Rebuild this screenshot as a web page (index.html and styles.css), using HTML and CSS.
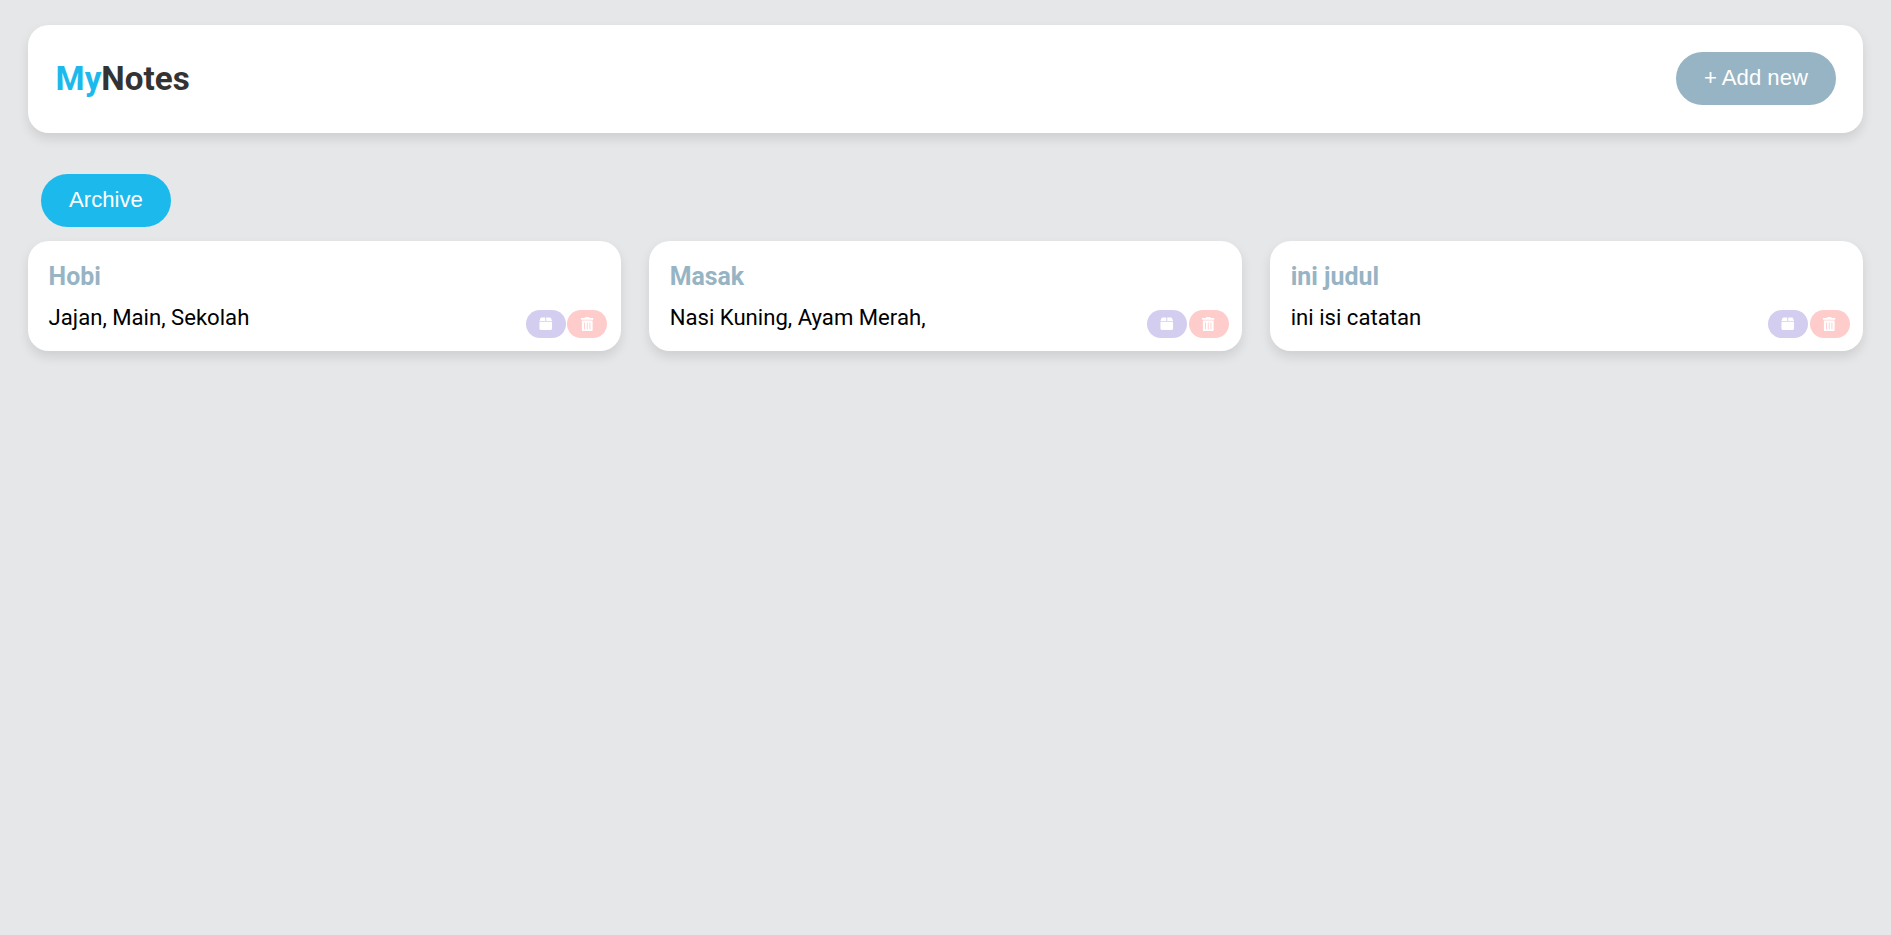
FILE: index.html
```html
<!DOCTYPE html>
<html lang="id">
<head>
<meta charset="utf-8">
<title>MyNotes</title>
<link rel="stylesheet" href="styles.css">
</head>
<body>
<svg class="sprite" aria-hidden="true">
  <symbol id="box" viewBox="0 0 16 16">
    <path d="M4 1.500h3.500v3.700H1.500l.9-2.600c.3-.8.8-1.100 1.600-1.100zM8.500 1.500H12c.8 0 1.300.3 1.600 1.100l.9 2.600h-6zM1.500 6h13v7c0 1-.6 1.500-1.500 1.500H3c-.9 0-1.500-.5-1.500-1.500z"/>
  </symbol>
  <symbol id="trash" viewBox="0 0 448 512">
    <path fill-rule="evenodd" d="M32 464a48 48 0 0 0 48 48h288a48 48 0 0 0 48-48V128H32zm272-256a16 16 0 0 1 32 0v224a16 16 0 0 1-32 0zm-96 0a16 16 0 0 1 32 0v224a16 16 0 0 1-32 0zm-96 0a16 16 0 0 1 32 0v224a16 16 0 0 1-32 0zM432 32H312l-9.400-18.700A24 24 0 0 0 281.100 0H166.800a23.700 23.700 0 0 0-21.400 13.300L136 32H16A16 16 0 0 0 0 48v32a16 16 0 0 0 16 16h416a16 16 0 0 0 16-16V48a16 16 0 0 0-16-16z"/>
  </symbol>
</svg>
<header class="header">
  <h1 class="logo"><span class="logo-accent">My</span>Notes</h1>
  <button class="button button-add">+ Add new</button>
</header>
<main>
  <div class="toolbar"><button class="button button-archive">Archive</button></div>
  <section class="notes">
    <article class="note">
      <h2 class="note-title">Hobi</h2>
      <p class="note-body">Jajan, Main, Sekolah</p>
      <div class="actions">
        <button class="action action-archive" aria-label="Archive"><svg class="icon-box"><use href="#box"/></svg></button>
        <button class="action action-delete" aria-label="Delete"><svg class="icon-trash"><use href="#trash"/></svg></button>
      </div>
    </article>
    <article class="note">
      <h2 class="note-title">Masak</h2>
      <p class="note-body">Nasi Kuning, Ayam Merah,</p>
      <div class="actions">
        <button class="action action-archive" aria-label="Archive"><svg class="icon-box"><use href="#box"/></svg></button>
        <button class="action action-delete" aria-label="Delete"><svg class="icon-trash"><use href="#trash"/></svg></button>
      </div>
    </article>
    <article class="note">
      <h2 class="note-title">ini judul</h2>
      <p class="note-body">ini isi catatan</p>
      <div class="actions">
        <button class="action action-archive" aria-label="Archive"><svg class="icon-box"><use href="#box"/></svg></button>
        <button class="action action-delete" aria-label="Delete"><svg class="icon-trash"><use href="#trash"/></svg></button>
      </div>
    </article>
  </section>
</main>
</body>
</html>
```
FILE: styles.css
```css
* {
  box-sizing: border-box;
  margin: 0;
  padding: 0;
}

body {
  min-height: 100vh;
  padding: 25px 27.8px;
  background: #e5e7e9;
  font-family: Roboto, sans-serif;
  font-size: 22.14px;
  color: #000;
}

.sprite {
  display: none;
}

.header,
.note {
  background: #fff;
  border-radius: 20.8px;
  box-shadow: 0 5.5px 11px rgba(0, 0, 0, 0.1);
}

.header {
  display: flex;
  align-items: center;
  justify-content: space-between;
  height: 108px;
  padding: 0 27.6px 0.6px 27.8px;
}

.logo {
  font-size: 33.2px;
  font-weight: 700;
  line-height: 39px;
  color: #333;
}

.logo-accent {
  color: #1cb9ec;
}

.button {
  height: 53px;
  padding: 0 27.7px 1px;
  border: 0;
  border-radius: 27.8px;
  font-family: "Liberation Sans", Arial, sans-serif;
  font-size: 22.14px;
  color: #fff;
}

.button-add {
  background: #97b4c4;
}

.button-archive {
  background: #1cb9ec;
}

.toolbar {
  display: flex;
  padding: 41px 13.6px 13.7px;
}

.notes {
  display: grid;
  grid-template-columns: repeat(3, 1fr);
  gap: 27.8px;
}

.note {
  position: relative;
  height: 110.8px;
  padding: 21px 20.8px 0;
}

.note-title {
  margin-bottom: 12px;
  font-size: 24.9px;
  font-weight: 700;
  line-height: 30px;
  color: #97b4c4;
}

.note-body {
  line-height: 27px;
}

.actions {
  position: absolute;
  right: 13.6px;
  bottom: 13.7px;
  display: flex;
  gap: 1.4px;
}

.action {
  display: flex;
  align-items: center;
  justify-content: center;
  width: 40px;
  height: 27.8px;
  border: 0;
  border-radius: 13.9px;
}

.action-archive {
  background: #d3cdf0;
}

.action-delete {
  background: #ffcccc;
}

.icon-box,
.icon-trash {
  fill: #fff;
}

.icon-box {
  width: 15.5px;
  height: 15.5px;
}

.icon-trash {
  width: 12.5px;
  height: 14.3px;
}
```
